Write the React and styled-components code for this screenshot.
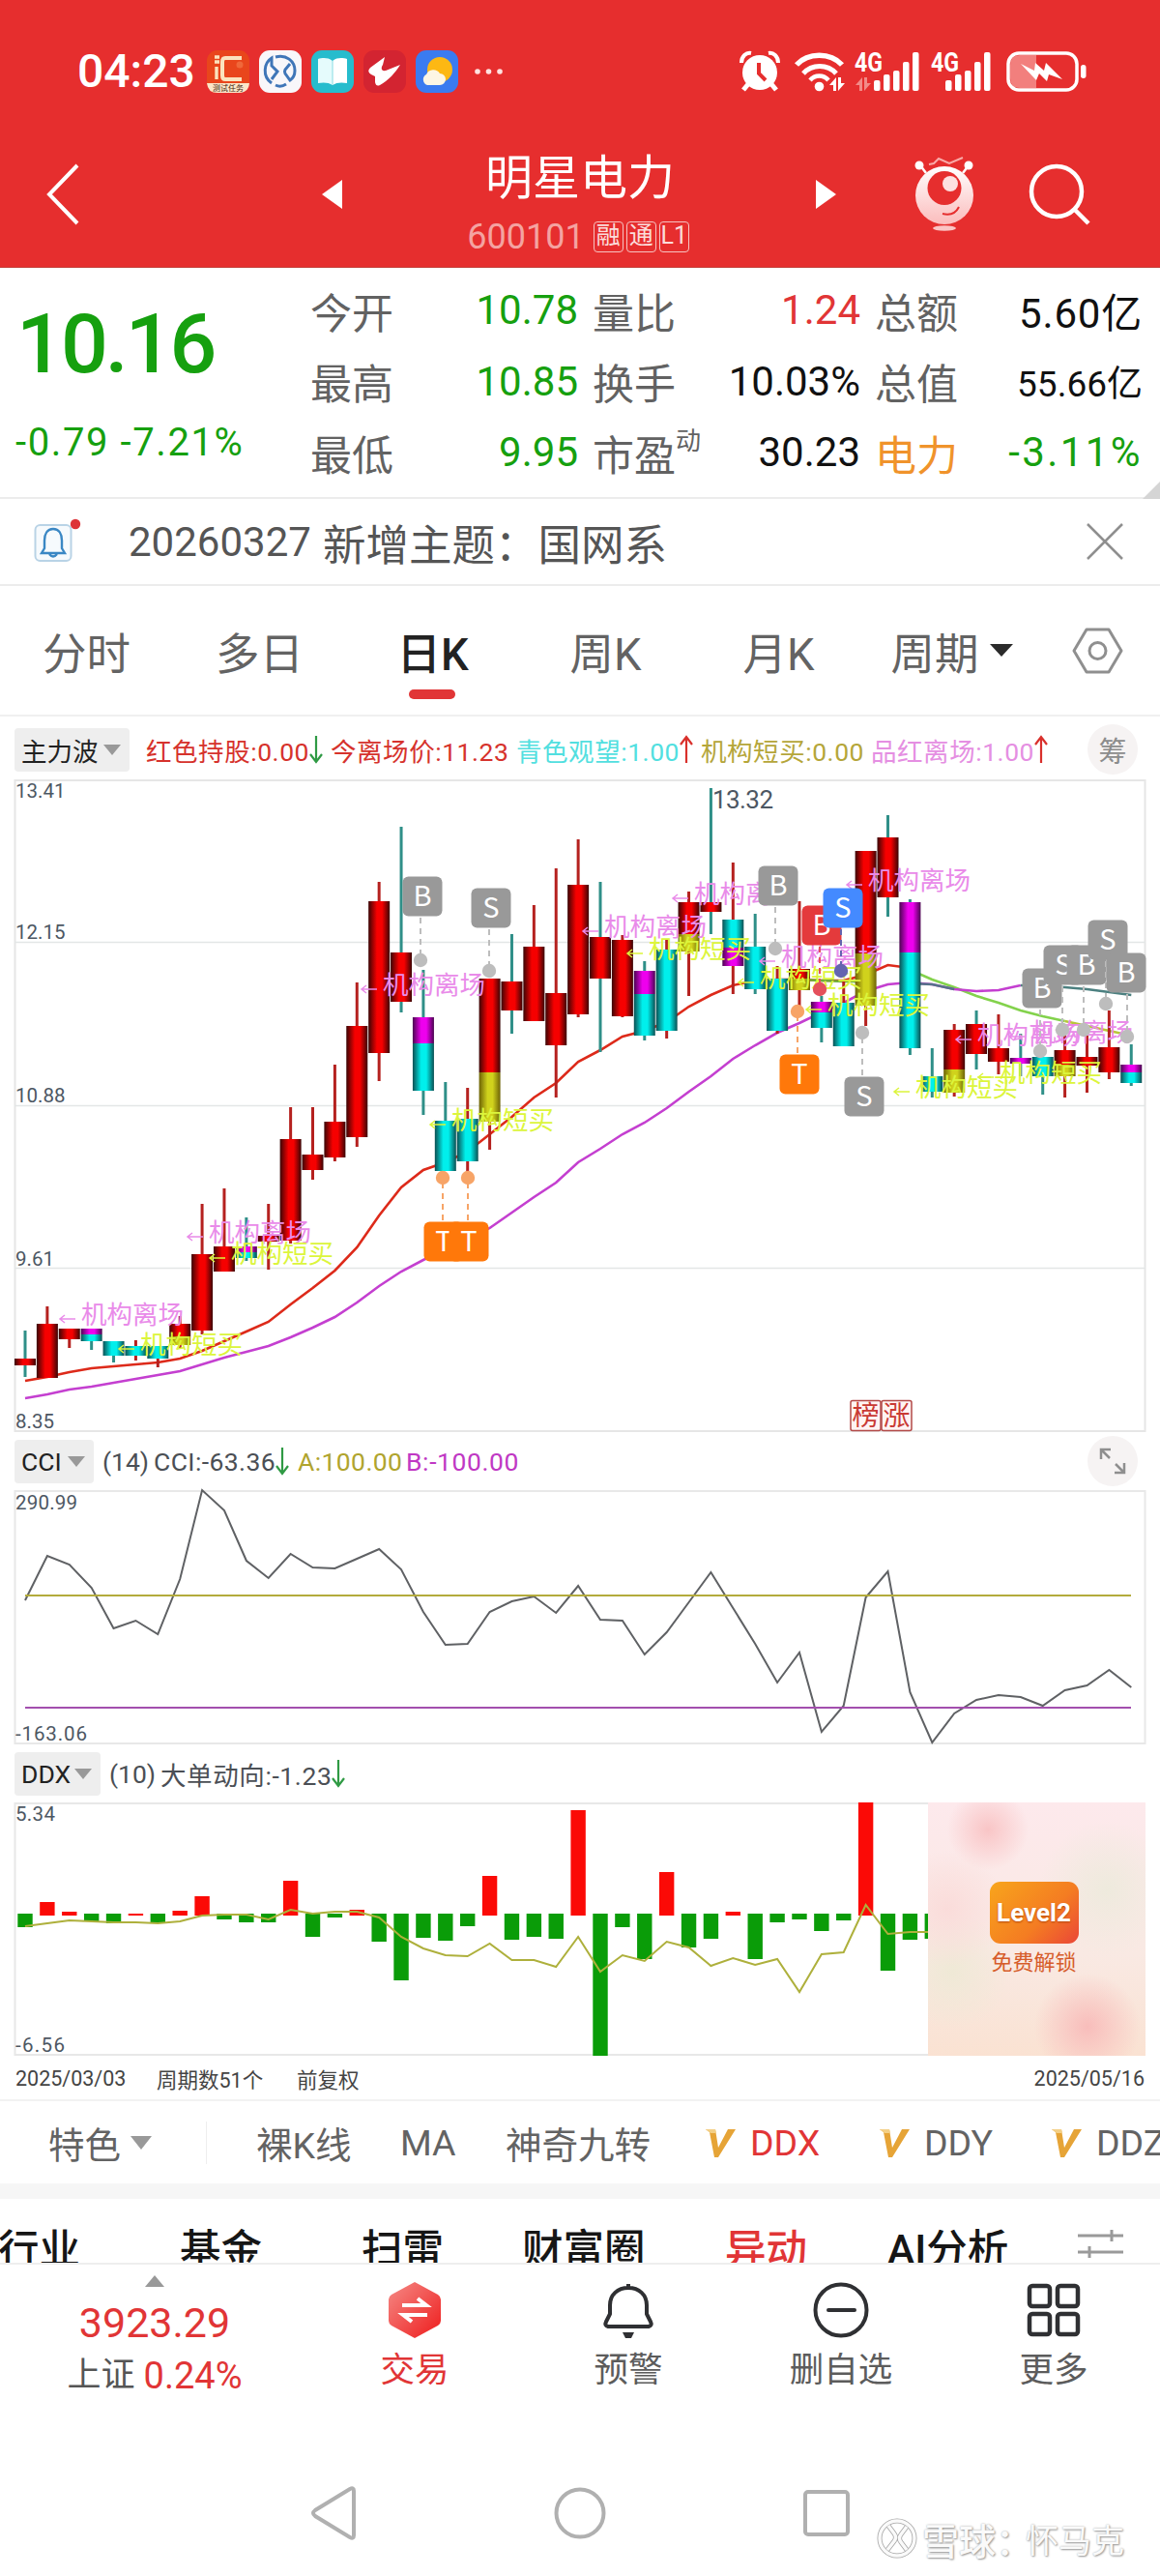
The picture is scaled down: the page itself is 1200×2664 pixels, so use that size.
import React from 'react'
import styled, {createGlobalStyle, css} from 'styled-components'

const RED = '#e62e2e'
const UP = '#e13536'
const DOWN = '#16a00f'

const GlobalStyle = createGlobalStyle`
  * {
    box-sizing: border-box;
  }
  body {
    margin: 0;
    background: #fff;
    font-family: Roboto, "Noto Sans CJK SC", sans-serif;
    color: #555;
  }
  svg {
    display: block;
    flex: none;
    overflow: visible;
  }
`;

const Screen = styled.div`
  position: relative;
  width: 1200px;
  height: 2664px;
  display: flex;
  flex-direction: column;
  overflow: hidden;
  white-space: nowrap;
`;

/* ---------- top ---------- */

const Top = styled.header`
  height: 277px;
  background: ${RED};
  border-bottom: 1px solid #c4413a;
  color: #fff;
`;

const StatusBar = styled.div`
  height: 148px;
  padding: 0 76px 0 80px;
  display: flex;
  align-items: center;
  justify-content: space-between;
`;

const StatusGroup = styled.div`
  display: flex;
  align-items: center;
  gap: 10px;
`;

const SystemGroup = styled.div`
  display: grid;
  grid-template-columns: 57px 62px 79px 78px 83px;
  align-items: center;
`;

const Clock = styled.span`
  width: 124px;
  font-size: 48px;
  font-weight: 500;
  line-height: 56px;
`;

const TitleBar = styled.div`
  height: 128px;
  padding: 0 72px 22px 48px;
  display: grid;
  grid-template-columns: 284px 150px 236px 228px 1fr 64px;
  grid-template-rows: 106px;
  align-items: center;
`;

const TitleBox = styled.div`
  margin-top: 22px;
  display: flex;
  flex-direction: column;
  align-items: center;
`;

const StockName = styled.h1`
  margin: 0;
  font-size: 49px;
  font-weight: 400;
  line-height: 66px;
`;

const CodeRow = styled.div`
  display: flex;
  align-items: center;
  gap: 3px;
  height: 54px;
  margin-left: -4px;
`;

const Code = styled.span`
  font-size: 36px;
  color: #f4a3a1;
  margin-right: 6px;
`;

const Tag = styled.span`
  width: 31px;
  height: 32px;
  border: 1.5px solid #f7c2c0;
  border-radius: 4px;
  color: #fbdcdb;
  font-size: 25px;
  line-height: 28px;
  text-align: center;
`;

/* ---------- quote ---------- */

const Quote = styled.section`
  position: relative;
  height: 239px;
  padding: 7px 18px 0 16px;
  display: grid;
  grid-template-columns: 305px 277px 15px 277px 15px 277px;
  border-bottom: 2px solid #ececec;
`;

const PriceBox = styled.div`
  display: flex;
  flex-direction: column;
  color: ${DOWN};
`;

const Price = styled.span`
  margin-top: 19px;
  font-size: 86px;
  font-weight: 500;
  line-height: 106px;
  letter-spacing: -3px;
  padding-left: 1px;
`;

const Change = styled.span`
  margin-top: 24px;
  font-size: 40px;
  line-height: 50px;
  letter-spacing: 1.6px;
`;

const QuoteCol = styled.div`
  grid-column: ${p => p.col};
  display: flex;
  flex-direction: column;
`;

const QuoteRow = styled.div`
  height: 73.5px;
  display: flex;
  align-items: center;
  justify-content: space-between;
  font-size: 43px;
`;

const QuoteLabel = styled.span`
  color: ${p => p.color || '#626262'};
  sup {
    font-size: 26px;
    line-height: 0;
    vertical-align: 22px;
  }
`;

const QuoteValue = styled.span`
  color: ${p => p.color || '#111'};
  font-size: ${p => p.size || 42}px;
  letter-spacing: ${p => p.ls || 0}px;
`;

const Corner = styled.i`
  position: absolute;
  right: 0;
  bottom: -2px;
  border-left: 18px solid transparent;
  border-bottom: 18px solid #d5d5d5;
`;

/* ---------- notice + period tabs ---------- */

const Notice = styled.section`
  height: 90px;
  padding: 0 38px 0 35px;
  display: flex;
  align-items: center;
  border-bottom: 2px solid #ececec;
`;

const NoticeDate = styled.span`
  margin-left: 49px;
  width: 201px;
  font-size: 42px;
`;

const NoticeText = styled.span`
  flex: 1;
  font-size: 44.5px;
`;

const Tabs = styled.nav`
  height: 135px;
  padding-right: 38px;
  display: flex;
  align-items: center;
  border-bottom: 2px solid #f0f0f0;
`;

const Tab = styled.button`
  width: 179px;
  height: 100%;
  padding: 0;
  border: 0;
  background: none;
  display: flex;
  align-items: center;
  justify-content: center;
  gap: 11px;
  position: relative;
  font-family: inherit;
  font-size: 45.5px;
  color: ${p => (p.$active ? '#222' : '#636363')};
  font-weight: ${p => (p.$active ? 500 : 400)};
  ${p => p.$active && css`
    &::after {
      content: '';
      position: absolute;
      left: 65px;
      top: 107px;
      width: 48px;
      height: 10px;
      border-radius: 5px;
      background: ${UP};
    }
  `}
`;

const Caret = styled.i`
  border-left: ${p => p.w / 2}px solid transparent;
  border-right: ${p => p.w / 2}px solid transparent;
  border-top: ${p => p.h}px solid ${p => p.color};
`;

const Settings = styled.span`
  margin-left: auto;
`;

/* ---------- indicator panels ---------- */

const IndicatorBar = styled.div`
  height: ${p => p.h}px;
  padding: ${p => p.pt || 0}px 22px 0 15px;
  display: flex;
  align-items: center;
  color: #4b4f55;
  font-size: 26.5px;
`;

const Chip = styled.span`
  width: ${p => p.w}px;
  height: 45px;
  margin-right: ${p => p.gap}px;
  padding: 0 9px 0 7px;
  border-radius: 4px;
  background: #eee;
  color: #222;
  display: flex;
  align-items: center;
  justify-content: space-between;
`;

const Reading = styled.span`
  width: ${p => p.w}px;
  color: ${p => p.color};
  display: flex;
  align-items: center;
  letter-spacing: ${p => p.ls || 0}px;
`;

const RoundButton = styled.button`
  width: 52px;
  height: 52px;
  margin-left: auto;
  margin-right: 1px;
  padding: 0;
  border: 0;
  border-radius: 50%;
  background: #f6f3f3;
  color: #8c8c8c;
  font: 29px "Noto Sans CJK SC", sans-serif;
  line-height: 50px;
  display: flex;
  align-items: center;
  justify-content: center;
`;

const ChartText = styled.text`
  font-size: ${p => p.size || 20.5}px;
  fill: ${p => p.fill || '#4d5763'};
`;

const FlowRow = styled.div`
  display: flex;
  height: 262px;
`;

const Level2 = styled.div`
  width: 225px;
  height: 262px;
  padding-top: 82px;
  display: flex;
  flex-direction: column;
  align-items: center;
  background:
    radial-gradient(circle 42px at 62px 28px, #f9c5c6 0, #f9c5c600 100%),
    radial-gradient(circle 55px at 165px 232px, #f8bdbb 0, #f8bdbb00 100%),
    radial-gradient(circle 70px at 185px 90px, #eeeadd 0, #eeeadd00 100%),
    radial-gradient(circle 60px at 20px 110px, #fadcda 0, #fadcda00 100%),
    radial-gradient(circle 60px at 25px 175px, #efe9d6 0, #efe9d600 100%),
    linear-gradient(#fde9ec, #f9e9e3 60%, #fae2d2);
`;

const Level2Button = styled.button`
  width: 92px;
  height: 64px;
  margin-right: 6px;
  padding: 0;
  border: 0;
  border-radius: 11px;
  background: linear-gradient(135deg, #f8a51c, #f47c22 60%, #ea4638);
  color: #fff;
  font: 700 26px Roboto, sans-serif;
  text-shadow: 0 1px 2px #b4460a;
`;

const Unlock = styled.span`
  margin: 3px 6px 0 0;
  font-size: 22px;
  line-height: 34px;
  color: #d65c2a;
`;

const DateRow = styled.div`
  height: 47px;
  padding: 2px 16px 0;
  display: grid;
  grid-template-columns: 146px 145px 1fr auto;
  align-items: center;
  border-bottom: 2px solid #f2f2f2;
  font-size: 21.5px;
  color: #444;
`;

/* ---------- lower bars ---------- */

const Features = styled.nav`
  height: 85px;
  padding-left: 50px;
  display: grid;
  grid-template-columns: 163px 52px 149px 109px 207px 180px 178px 180px;
  align-items: center;
  overflow: hidden;
  font-size: 37.5px;
  color: #636363;
`;

const Feature = styled.span`
  display: flex;
  align-items: center;
  gap: ${p => p.gap || 14}px;
  color: ${p => p.color};
`;

const Divider = styled.i`
  width: 1px;
  height: 44px;
  background: #eee;
`;

const Sections = styled.nav`
  height: 84px;
  border-top: 16px solid #f6f6f6;
  border-bottom: 2px solid #eee;
  padding-top: 22px;
  display: grid;
  grid-template-columns: 186px 188px 166px 210px 168px 197px 1fr;
  overflow: hidden;
  color: #161616;
  font-size: 42.5px;
  font-weight: 500;
  line-height: 62px;
`;

const Section = styled.span`
  margin-left: ${p => p.shift || 0}px;
  color: ${p => p.color};
`;

const BottomBar = styled.footer`
  height: 150px;
  display: grid;
  grid-template-columns: 320px 218px 224px 216px 224px;
`;

const IndexBox = styled.div`
  padding-top: 11px;
  display: flex;
  flex-direction: column;
  align-items: center;
  color: ${UP};
`;

const IndexValue = styled.span`
  font-size: 43px;
  line-height: 50px;
  margin-top: 12px;
`;

const IndexChange = styled.span`
  margin-top: 3px;
  font-size: 38px;
  line-height: 54px;
  display: flex;
  align-items: center;
  gap: 9px;
  b {
    font-size: 35px;
    font-weight: 400;
    color: #555;
  }
`;

const Action = styled.button`
  padding: 17px 0 0;
  border: 0;
  background: none;
  display: flex;
  flex-direction: column;
  align-items: center;
  gap: 5px;
  font-family: inherit;
  font-size: 35.5px;
  line-height: 54px;
  color: ${p => p.color || '#5c5c5c'};
`;

const NavBar = styled.div`
  flex: 1;
  padding: 54px 0 0 0;
  display: grid;
  grid-template-columns: 345px 1fr 1fr 345px;
  svg {
    margin-left: -30px;
  }
`;

const Watermark = styled.div`
  position: absolute;
  left: 906px;
  top: 2599px;
  height: 52px;
  display: flex;
  align-items: center;
  color: #fafafa;
  font-size: 38px;
  font-weight: 500;
  text-shadow: 1px 1px 2px #999, 0 0 2px #b0b0b0;
  span {
    font-size: 34px;
    font-weight: 400;
    margin-left: -7px;
  }
`;

/* ---------- small drawings ---------- */

const Arrow = ({up}) => (
  <svg width="14" height="30" viewBox="0 0 14 30" fill="none" stroke={up ? '#d9302c' : '#2f9a44'} strokeWidth="2.2">
    {up ? <path d="M7 29V2M1 10l6-8 6 8" /> : <path d="M7 1v27M1 20l6 8 6-8" />}
  </svg>
)

const AppIcons = () => (
  <>
    <svg width="44" height="44" viewBox="0 0 44 44">
      <rect width="44" height="44" rx="11" fill="#e9461c" />
      <path d="M36 8H19q-3 0-3 4v14q0 4 3 4h17" fill="none" stroke="#fbe3bd" strokeWidth="4" />
      <path d="M10 17v13M8 7h5M8 12h5" stroke="#fbe3bd" strokeWidth="3.4" />
      <circle cx="34" cy="15" r="3.5" fill="#f0683a" />
      <path d="M0 34h44q-1 10-11 10H11Q1 44 0 34z" fill="#fbe6c8" />
      <text x="22" y="42" fontSize="8" textAnchor="middle" fill="#42210b">测试任务</text>
    </svg>
    <svg width="44" height="44" viewBox="0 0 44 44">
      <rect width="44" height="44" rx="11" fill="#f8f7fa" />
      <g fill="none" stroke="#3f76b8" strokeWidth="3">
        <path d="M13 34C3 27 5 13 13 8v8l6 6-6 8" />
        <path d="M17 7c11-3 20 4 20 14 0 4-2 8-5 10l-5-7q-1-2 0-4l5-6M17 36c4 2 8 1 11-1" />
      </g>
    </svg>
    <svg width="44" height="44" viewBox="0 0 44 44">
      <rect width="44" height="44" rx="11" fill="#26bccd" />
      <path d="M22 11C17 7 11 8 7 9v25c5-1 11-1 15 2z" fill="#e5fbfc" />
      <path d="M22 11c5-4 11-3 15-2v25c-5-1-11-1-15 2z" fill="#fff" />
      <path d="M22 11v25" stroke="#a5e5ea" strokeWidth="1.4" />
    </svg>
    <svg width="44" height="44" viewBox="0 0 44 44">
      <rect width="44" height="44" rx="11" fill="#d32431" />
      <path d="M22 7L7 18q-4 4 1 7l4 2v6q1 5 5 3c9-5 16-13 21-21l-15 6c-5 1-5-3-3-6z" fill="#fff" />
    </svg>
    <svg width="44" height="44" viewBox="0 0 44 44">
      <rect width="44" height="44" rx="11" fill="#3a7bf0" />
      <circle cx="25" cy="20" r="13" fill="#fdb813" />
      <path d="M12 36a6 6 0 0 1-1-11 8 8 0 0 1 14-1 6 6 0 0 1 0 12z" fill="#fdf6e4" />
    </svg>
    <svg width="44" height="44" viewBox="0 0 44 44" fill="#ffe3e1">
      <circle cx="10" cy="22" r="2.8" />
      <circle cx="21.5" cy="22" r="2.8" />
      <circle cx="33" cy="22" r="2.8" />
    </svg>
  </>
)

const Signal = ({offset, dim}) => (
  <svg width={dim ? 67 : 63} height="42" viewBox={`0 0 ${dim ? 67 : 63} 42`} fill="#fff">
    <text x="0" y="20.5" fontSize="28" fontWeight="700" textLength="29" lengthAdjust="spacingAndGlyphs">4G</text>
    {dim && <path d="M1 35l7-8v14h-3v-6zM17 33l-7 8V27h3v6z" fill="#f28b88" />}
    {[11, 17, 21, 30, 40].map((h, i) => (
      <rect key={i} x={offset + i * 10} y={41 - h} width="6.5" height={h} rx="2" />
    ))}
  </svg>
)

const SystemIcons = () => (
  <SystemGroup>
    <svg width="42" height="42" viewBox="0 0 42 42">
      <g stroke="#fff" fill="none">
        <path d="M2 12c0-7 5-11 10-10M40 12c0-7-5-11-10-10" strokeWidth="4" />
        <path d="M9 34l-5 6M33 34l5 6" strokeWidth="5" />
      </g>
      <circle cx="21" cy="22" r="18" fill="#fff" />
      <path d="M20 12v11l7 7" fill="none" stroke={RED} strokeWidth="4" />
    </svg>
    <svg width="52" height="42" viewBox="0 0 52 42" fill="none" stroke="#fff" strokeWidth="5.5">
      <path d="M2 14C14 1 37 1 49 14" />
      <path d="M9 23c9-10 25-10 34 0" strokeWidth="5" />
      <path d="M16 30c5-6 14-6 19 0" strokeWidth="4.5" />
      <circle cx="25.5" cy="36.5" r="4.8" fill="#fff" stroke="none" />
      <path d="M36 35l7-8v14h-3v-6zM52 33l-7 8V27h3v6z" fill="#fff" stroke="none" />
    </svg>
    <Signal offset={20} dim />
    <Signal offset={15} />
    <svg width="83" height="42" viewBox="0 0 83 42">
      <path d="M14 4h17v34H14Q4 38 4 28V14Q4 4 14 4z" fill="#f27f7d" />
      <rect x="2" y="2" width="71" height="38" rx="11" fill="none" stroke="#fff" strokeWidth="3.5" />
      <path d="M15 13l14 7 1-8 9 8 2-8 17 17-14-5-2 7-8-8-3 7z" fill="#fff" />
      <rect x="77" y="14" width="5.5" height="14" rx="2.7" fill="#fff" />
    </svg>
  </SystemGroup>
)

const Robot = () => (
  <svg width="62" height="78" viewBox="0 0 62 78">
    <defs>
      <linearGradient id="robot" x1="0" y1="0" x2="0" y2="1">
        <stop offset="0" stopColor="#fff" />
        <stop offset="1" stopColor="#fbbcbc" />
      </linearGradient>
    </defs>
    <path d="M15 8l5-1 5-5 11 5 14-6" fill="none" stroke="#f9aaa8" strokeWidth="2" />
    <path d="M6 9l6 8M56 9l-6 8" stroke="#fff" strokeWidth="2.5" />
    <circle cx="5" cy="9" r="4.5" fill="#fff" />
    <circle cx="56" cy="9" r="4.5" fill="#fff" />
    <circle cx="31" cy="40" r="30" fill="url(#robot)" />
    <circle cx="31" cy="32.5" r="17.5" fill={RED} />
    <circle cx="37" cy="28" r="8" fill="#fde0e0" />
    <path d="M29 59c8 2 14-1 17-7" fill="none" stroke={RED} strokeWidth="2" />
    <ellipse cx="31" cy="74" rx="12" ry="2.8" fill="#fbc4c4" />
  </svg>
)

const GoldV = () => (
  <svg width="32" height="30" viewBox="0 0 32 30">
    <path d="M0 1h10l3 19L23 1h8L13 30H9L4 4z" fill="#e6a437" />
    <path d="M0 1h10l1 4H5z" fill="#f3cf86" />
  </svg>
)

/* ---------- charts ---------- */

const STEP = 22.885
const cx = i => 26 + i * STEP
const line = (values, from = 0) => values.map((y, i) => `${cx(i + from).toFixed(1)},${y}`).join(' ')

// high, top, bottom, low, wick, fill, [split, lower fill]
const CANDLES = [
  [570, 599, 606, 618, 't', 'r'], [545, 563, 619, 619, 'r', 'r'], [568, 568, 579, 588, 'r', 'r'],
  [568, 568, 581, 590, 't', 'm', 574, 'c'], [581, 581, 596, 603, 't', 'c'], [580, 586, 596, 601, 'r', 'c'],
  [586, 586, 599, 608, 'r', 'c'], [555, 563, 585, 589, 'r', 'r', 576, 'y'], [439, 491, 570, 574, 'r', 'r'],
  [423, 483, 509, 509, 'r', 'r'], [453, 483, 495, 498, 't', 'm', 489, 'c'], [439, 472, 478, 507, 'r', 'r'],
  [339, 372, 477, 480, 'r', 'r'], [339, 388, 404, 414, 'r', 'r'], [295, 354, 391, 395, 'r', 'r'],
  [210, 255, 370, 380, 'r', 'r'], [106, 126, 283, 312, 'r', 'r'], [49, 179, 230, 241, 't', 'r'],
  [197, 246, 322, 347, 't', 'm', 273, 'c'], [313, 353, 405, 405, 't', 'c'], [319, 351, 395, 406, 'r', 'c'],
  [206, 206, 354, 383, 'r', 'r', 303, 'y'], [160, 209, 239, 263, 't', 'r'], [130, 173, 250, 250, 'r', 'r'],
  [92, 221, 275, 329, 'r', 'r'], [62, 109, 243, 246, 'r', 'r'], [106, 163, 206, 282, 't', 'r'],
  [161, 166, 245, 246, 'r', 'r'], [188, 198, 265, 270, 't', 'm', 222, 'c'], [166, 176, 260, 268, 'r', 'c'],
  [116, 127, 178, 224, 'r', 'r', 160, 'y'], [9, 127, 137, 160, 't', 'r'], [86, 145, 193, 222, 'r', 'c', 174, 'm'],
  [139, 173, 217, 222, 't', 'c'], [193, 206, 260, 263, 'r', 'c'], [126, 196, 218, 234, 'r', 'r', 206, 'y'],
  [224, 230, 257, 272, 't', 'm', 241, 'c'], [207, 231, 276, 276, 'r', 'c'], [74, 74, 234, 255, 'r', 'r', 180, 'y'],
  [37, 60, 122, 142, 't', 'r'], [124, 127, 278, 285, 't', 'm', 179, 'c'], [278, 307, 323, 329, 't', 'c'],
  [253, 259, 324, 328, 'r', 'r', 300, 'y'], [239, 253, 284, 300, 't', 'r'], [243, 278, 292, 305, 'r', 'r'],
  [263, 288, 294, 307, 't', 'm'], [287, 287, 307, 326, 't', 'c'], [264, 280, 307, 329, 'r', 'r', 295, 'y'],
  [265, 287, 296, 324, 'r', 'r'], [239, 277, 303, 310, 'r', 'r'], [274, 295, 314, 317, 't', 'm', 303, 'c'],
]

const MA_FAST = [622, 618, 613, 609, 607, 605, 603, 599, 591, 581, 571, 561, 543, 526, 508, 484, 451, 422, 404, 396,
  385, 367, 349, 329, 314, 292, 280, 266, 260, 251, 235, 223, 213, 208, 207, 207, 208, 208, 202, 192, 195]
const MA_FALL = [197, 207, 215, 224, 231, 239, 245, 250]
const MA_SLOW = [640, 636, 631, 628, 624, 620, 616, 612, 605, 598, 592, 586, 577, 567, 556, 541, 524, 509, 497, 486,
  476, 464, 448, 432, 417, 396, 382, 367, 355, 340, 323, 307, 289, 275, 262, 252, 241, 231, 219, 212, 210, 212,
  217, 219, 218, 213]

const EXITS = [[84, 553], [216, 468], [396, 212], [625, 152], [718, 118], [808, 183], [898, 104], [1011, 264], [1066, 261]]
const BUYS = [[145, 584], [239, 490], [467, 352], [671, 175], [786, 205], [856, 233], [947, 318], [1034, 303]]

const GREY = '#999'
const PINS = [
  ['B', 437, 121, 435, 187, GREY, '#bdbdbd'],
  ['S', 508, 133, 506, 198, GREY, '#bdbdbd'],
  ['T', 459, 478, 458, 412, '#ff780a', '#f7a467'],
  ['T', 485, 478, 484, 412, '#ff780a', '#f7a467'],
  ['B', 805, 110, 802, 175, GREY, '#bdbdbd'],
  ['B', 850, 151, 848, 217, '#e43a3c', '#e4505c'],
  ['S', 872, 133, 870, 198, '#448aff', '#6464b0'],
  ['T', 827, 305, 825, 240, '#ff780a', '#f7a467'],
  ['S', 894, 328, 892, 262, GREY, '#bdbdbd'],
  ['B', 1078, 216, 1076, 281, GREY, '#bdbdbd'],
  ['S', 1100, 192, 1099, 259, GREY, '#bdbdbd'],
  ['B', 1124, 192, 1121, 259, GREY, '#bdbdbd'],
  ['S', 1146, 166, 1144, 232, GREY, '#bdbdbd'],
  ['B', 1165, 200, 1166, 266, GREY, '#bdbdbd'],
]

const FILLS = {
  r: ['#3a0505', '#f60000'],
  c: ['#0b4f52', '#00efec'],
  m: ['#4a0550', '#ee00ee'],
  y: ['#6d6205', '#d0d21c'],
}

const Gradients = () => (
  <defs>
    {Object.entries(FILLS).map(([key, [edge, mid]]) => (
      <linearGradient id={`fill-${key}`} key={key}>
        <stop offset="0" stopColor={edge} />
        <stop offset="0.4" stopColor={mid} />
        <stop offset="0.64" stopColor={mid} />
        <stop offset="1" stopColor={edge} />
      </linearGradient>
    ))}
  </defs>
)

const Signals = ({points, label, color}) => points.map(([x, y], i) => (
  <g key={i}>
    <path d={`M${x - 6} ${y + 5}h-16m5-4l-5 4 5 4`} fill="none" stroke={color} strokeWidth="1.5" />
    <ChartText x={x} y={y + 10} size={26.5} fill={color}>{label}</ChartText>
  </g>
))

const KLineChart = () => (
  <svg width="1200" height="675" viewBox="0 0 1200 675">
    <Gradients />
    <rect x="15.5" y="1" width="1169" height="673" fill="none" stroke="#e6e6e6" strokeWidth="2" />
    {[168, 337, 505].map(y => <path key={y} d={`M15 ${y}.5h1170`} stroke="#e3e6e6" strokeWidth="1.5" />)}
    {[['13.41', 19], ['12.15', 165], ['10.88', 334], ['9.61', 503], ['8.35', 671]].map(([t, y]) => (
      <ChartText key={t} x="16" y={y}>{t}</ChartText>
    ))}
    <g fill="none" strokeWidth="2.6">
      <polyline points={line(MA_FAST)} stroke="#dd2a1a" />
      <polyline points={line([207, 208, 209, 209], 35)} stroke="#6fae3a" />
      <polyline points={line(MA_FALL, 40)} stroke="#83d24c" />
      <polyline points={line([250, 255, 260, 265], 47)} stroke="#b8c63a" />
      <polyline points={line(MA_SLOW)} stroke="#c43fd0" />
      <polyline points={line([211, 212, 217], 40)} stroke="#56728a" />
      <polyline points={line([213, 214, 215, 217, 220, 223], 45)} stroke="#4c8080" />
    </g>
    {CANDLES.map(([high, top, bottom, low, wick, fill, split, fill2], i) => (
      <g key={i}>
        <rect x={cx(i) - 1.5} y={high} width="3" height={low - high} fill={wick === 'r' ? '#b5211f' : '#2f8f88'} />
        <rect x={cx(i) - 11} y={top} width="22" height={(split || bottom) - top} fill={`url(#fill-${fill})`} />
        {split && <rect x={cx(i) - 11} y={split} width="22" height={bottom - split} fill={`url(#fill-${fill2})`} />}
      </g>
    ))}
    <ChartText x="737" y="30" size={26} textLength="63">13.32</ChartText>
    <Signals points={EXITS} label="机构离场" color="#e98be9" />
    <Signals points={BUYS} label="机构短买" color="#dcf53c" />
    {PINS.map(([letter, x, y, dx, dy, color, dot], i) => (
      <g key={i}>
        <path d={`M${dx} ${y}V${dy}`} stroke={dot} strokeWidth="2" strokeDasharray="6 5" />
        <circle cx={dx} cy={dy} r="7.2" fill={dot} />
        <rect x={x - 20.5} y={y - 20.5} width="41" height="41" rx="6" fill={color} />
        <ChartText x={x} y={y + 10} size={29} fill="#fff" textAnchor="middle" fontFamily="Noto Sans CJK SC">{letter}</ChartText>
      </g>
    ))}
    {[['榜', 880], ['涨', 912]].map(([t, x]) => (
      <g key={t}>
        <rect x={x} y="642.5" width="31" height="31" rx="2" fill="#fff4f3" stroke="#b34a48" strokeWidth="1.5" />
        <ChartText x={x + 15.5} y="668" size={28} fill="#c93a34" textAnchor="middle">{t}</ChartText>
      </g>
    ))}
  </svg>
)

const CCI = [114, 68, 77, 101, 143, 135, 149, 92, 0, 21, 73, 91, 66, 80, 81, 71, 61, 82, 126, 160, 159, 126, 115, 110,
  127, 99, 134, 135, 170, 147, 116, 85, 122, 159, 199, 168, 250, 223, 111, 84, 209, 261, 231, 217, 212, 214, 223,
  207, 202, 186, 204]

const CciChart = () => (
  <svg width="1200" height="263" viewBox="0 0 1200 263">
    <rect x="15.5" y="1" width="1169" height="261" fill="none" stroke="#e8e8e8" strokeWidth="2" />
    <ChartText x="16" y="20" textLength="64">290.99</ChartText>
    <ChartText x="16" y="259" textLength="74">-163.06</ChartText>
    <polyline points={line(CCI)} fill="none" stroke="#5f6164" strokeWidth="2" />
    <path d="M26 109h1144" stroke="#b3ab3c" strokeWidth="2.2" />
    <path d="M26 225h1144" stroke="#a34fae" strokeWidth="2.2" />
  </svg>
)

const DDX_BARS = [129, 103, 113, 123, 125, 115, 125, 112, 97, 121, 124, 124, 81, 139, 119, 111, 144, 184, 140, 143, 128,
  76, 142, 139, 141, 8, 262, 129, 162, 72, 150, 141, 113, 162, 124, 121, 133, 122, 0, 174, 142, 141]
const DDX_LINE = [128, 125, 122, 123, 124, 124, 125, 123, 117, 116, 116, 121, 111, 115, 113, 113, 119, 139, 151, 158,
  159, 146, 163, 163, 170, 139, 175, 158, 164, 144, 150, 169, 161, 168, 162, 196, 157, 155, 106, 136, 134, 134]

const DdxChart = () => (
  <svg width="960" height="262" viewBox="0 0 960 262">
    <path d="M960 1H15.5v260H960" fill="none" stroke="#e8e8e8" strokeWidth="2" />
    <ChartText x="16" y="19" textLength="41">5.34</ChartText>
    <ChartText x="16" y="258" textLength="51">-6.56</ChartText>
    {DDX_BARS.map((y, i) => (y < 117
      ? <rect key={i} x={cx(i) - 7.7} y={y} width="15.4" height={117 - y} fill="#fb0a06" />
      : <rect key={i} x={cx(i) - 7.7} y="115" width="15.4" height={y - 115} fill="#0a9c08" />
    ))}
    <polyline points={line(DDX_LINE)} fill="none" stroke="#aeb03c" strokeWidth="2" />
  </svg>
)

/* ---------- data ---------- */

// label, value, colour, superscript, font size, letter spacing
const QUOTES = [
  [['今开', '10.78', DOWN], ['最高', '10.85', DOWN], ['最低', '9.95', DOWN]],
  [['量比', '1.24', UP], ['换手', '10.03%'], ['市盈', '30.23', null, '动']],
  [['总额', '5.60亿', null, null, 42, 0.8], ['总值', '55.66亿', null, null, 37], ['电力', '-3.11%', DOWN, null, 42, 2.4]],
]

const READINGS = [
  ['红色持股:0.00', '#d6322c', 191, 'down'],
  ['今离场价:11.23', '#d6322c', 192],
  ['青色观望:1.00', '#52dfe0', 191, 'up'],
  ['机构短买:0.00', '#b5a63a', 176],
  ['品红离场:1.00', '#e58fe2', 190, 'up'],
]

const App = () => (
  <>
    <GlobalStyle />
    <Screen>
      <Top>
        <StatusBar>
          <StatusGroup>
            <Clock>04:23</Clock>
            <AppIcons />
          </StatusGroup>
          <SystemIcons />
        </StatusBar>
        <TitleBar>
          <svg width="34" height="64" viewBox="0 0 34 64" fill="none" stroke="#fff" strokeWidth="4">
            <path d="M32 2L3 32l29 30" />
          </svg>
          <svg width="22" height="30" viewBox="0 0 22 30"><path d="M22 0v30L1 15z" fill="#fff" /></svg>
          <TitleBox>
            <StockName>明星电力</StockName>
            <CodeRow>
              <Code>600101</Code>
              <Tag>融</Tag>
              <Tag>通</Tag>
              <Tag>L1</Tag>
            </CodeRow>
          </TitleBox>
          <svg width="147" height="30" viewBox="0 0 147 30"><path d="M126 0v30l21-15z" fill="#fff" /></svg>
          <Robot />
          <svg width="64" height="64" viewBox="0 0 64 64" fill="none" stroke="#fff" strokeWidth="4.5">
            <circle cx="29" cy="29" r="26" />
            <path d="M47 47l15 15" />
          </svg>
        </TitleBar>
      </Top>

      <Quote>
        <PriceBox>
          <Price>10.16</Price>
          <Change>-0.79 -7.21%</Change>
        </PriceBox>
        {QUOTES.map((rows, c) => (
          <QuoteCol key={c} col={c * 2 + 2}>
            {rows.map(([label, value, color, sup, size, ls]) => (
              <QuoteRow key={label}>
                <QuoteLabel color={label === '电力' ? '#f0932b' : undefined}>
                  {label}{sup && <sup>{sup}</sup>}
                </QuoteLabel>
                <QuoteValue color={color} size={size} ls={ls}>{value}</QuoteValue>
              </QuoteRow>
            ))}
          </QuoteCol>
        ))}
        <Corner />
      </Quote>

      <Notice>
        <svg width="49" height="48" viewBox="0 0 49 48">
          <rect x="1.5" y="7" width="37" height="37" rx="5" fill="#f6fafd" stroke="#b9d3e6" strokeWidth="2" />
          <path d="M8 36h24l-3-5v-8c0-7-3-12-9-12s-9 5-9 12v8z" fill="none" stroke="#3a87c4" strokeWidth="2.4" />
          <path d="M16 37q4 5 8 0" fill="none" stroke="#3a87c4" strokeWidth="2.4" />
          <circle cx="43" cy="6" r="5.2" fill="#dd3338" />
        </svg>
        <NoticeDate>20260327</NoticeDate>
        <NoticeText>新增主题：国网系</NoticeText>
        <svg width="38" height="38" viewBox="0 0 38 38" stroke="#8f8f8f" strokeWidth="2.5">
          <path d="M1 1l36 36M37 1L1 37" />
        </svg>
      </Notice>

      <Tabs>
        {['分时', '多日', '日K', '周K', '月K'].map(name => (
          <Tab key={name} $active={name === '日K'}>{name}</Tab>
        ))}
        <Tab>周期<Caret w={24} h={13} color="#2b2b2b" /></Tab>
        <Settings>
          <svg width="53" height="48" viewBox="0 0 53 48" fill="none" stroke="#8f8f8f" strokeWidth="3">
            <path d="M15 2h23l13 22-13 22H15L2 24z" strokeLinejoin="round" />
            <circle cx="26.5" cy="24" r="8.5" />
          </svg>
        </Settings>
      </Tabs>

      <IndicatorBar h={65} pt={3}>
        <Chip w={119} gap={17}>主力波<Caret w={19} h={11} color="#999" /></Chip>
        {READINGS.map(([text, color, w, dir]) => (
          <Reading key={text} w={w} color={color} ls={0.55}>
            {text}{dir && <Arrow up={dir === 'up'} />}
          </Reading>
        ))}
        <RoundButton>筹</RoundButton>
      </IndicatorBar>
      <KLineChart />

      <IndicatorBar h={60}>
        <Chip w={82} gap={9}>CCI<Caret w={19} h={11} color="#999" /></Chip>
        <Reading w={53}>(14)</Reading>
        <Reading w={149} ls={0.4}>CCI:-63.36<Arrow /></Reading>
        <Reading w={112} color="#b0a42e" ls={0.4}>A:100.00</Reading>
        <Reading w={130} color="#c038c4" ls={0.6}>B:-100.00</Reading>
        <RoundButton>
          <svg width="28" height="28" viewBox="0 0 28 28" fill="none" stroke="#8f8f8f" strokeWidth="2.5">
            <path d="M2 12V2h10M2 2l9 9M26 16v10H16M26 26l-9-9" />
          </svg>
        </RoundButton>
      </IndicatorBar>
      <CciChart />

      <IndicatorBar h={60}>
        <Chip w={89} gap={9}>DDX<Caret w={19} h={11} color="#999" /></Chip>
        <Reading w={53}>(10)</Reading>
        <Reading w={200} ls={0.6}>大单动向:-1.23<Arrow /></Reading>
      </IndicatorBar>
      <FlowRow>
        <DdxChart />
        <Level2>
          <Level2Button>Level2</Level2Button>
          <Unlock>免费解锁</Unlock>
        </Level2>
      </FlowRow>
      <DateRow>
        <span>2025/03/03</span>
        <span>周期数51个</span>
        <span>前复权</span>
        <span>2025/05/16</span>
      </DateRow>

      <Features>
        <Feature gap={10}>特色<Caret w={23} h={14} color="#999" /></Feature>
        <Divider />
        <Feature>裸K线</Feature>
        <Feature>MA</Feature>
        <Feature>神奇九转</Feature>
        <Feature color={UP}><GoldV />DDX</Feature>
        <Feature><GoldV />DDY</Feature>
        <Feature><GoldV />DDZ</Feature>
      </Features>
      <Sections>
        <Section shift={-2}>行业</Section>
        <Section>基金</Section>
        <Section>扫雷</Section>
        <Section>财富圈</Section>
        <Section color={UP}>异动</Section>
        <Section>AI分析</Section>
        <svg width="48" height="60" viewBox="0 0 48 60" stroke="#9a9a9a" strokeWidth="3">
          <path d="M0 16h47M35 10v12M0 33h47M12 27v12M0 50h47M35 44v12" />
        </svg>
      </Sections>

      <BottomBar>
        <IndexBox>
          <svg width="20" height="12" viewBox="0 0 20 12"><path d="M10 0l10 12H0z" fill="#999" /></svg>
          <IndexValue>3923.29</IndexValue>
          <IndexChange><b>上证</b>0.24%</IndexChange>
        </IndexBox>
        <Action color={UP}>
          <svg width="60" height="60" viewBox="0 0 60 60">
            <defs>
              <linearGradient id="trade" x1="0" y1="0" x2="1" y2="1">
                <stop offset="0" stopColor="#f58a86" />
                <stop offset="1" stopColor="#ee1c1c" />
              </linearGradient>
            </defs>
            <path d="M30 1l24 13q3 2 3 5v22q0 3-3 5L30 59 6 46q-3-2-3-5V19q0-3 3-5z" fill="url(#trade)" />
            <path d="M17 25h25l-9-7M43 35H18l9 7" fill="none" stroke="#fff" strokeWidth="4" />
          </svg>
          交易
        </Action>
        <Action>
          <svg width="60" height="60" viewBox="0 0 60 60" fill="none" stroke="#2f3033" strokeWidth="4">
            <path d="M30 3v4M9 47q-4-1-2-5l4-8V25c0-11 8-18 19-18s19 7 19 18v9l4 8q2 4-2 5z" strokeLinejoin="round" />
            <path d="M24 53h12l-3 6h-6z" fill="#2f3033" stroke="none" />
          </svg>
          预警
        </Action>
        <Action>
          <svg width="60" height="60" viewBox="0 0 60 60" fill="none" stroke="#2f3033" strokeWidth="4">
            <circle cx="30" cy="30" r="26.5" />
            <path d="M17 30h27" strokeLinecap="round" />
          </svg>
          删自选
        </Action>
        <Action>
          <svg width="60" height="60" viewBox="0 0 60 60" fill="none" stroke="#2f3033" strokeWidth="4.5">
            <rect x="5" y="5" width="21" height="21" rx="3" />
            <rect x="34" y="5" width="21" height="21" rx="3" />
            <rect x="5" y="34" width="21" height="21" rx="3" />
            <rect x="34" y="34" width="21" height="21" rx="3" />
          </svg>
          更多
        </Action>
      </BottomBar>

      <NavBar>
        <i />
        <svg width="60" height="104" viewBox="0 0 60 104" fill="none" stroke="#b0b0b0" strokeWidth="4">
          <path d="M47 28q4-2 4 2v46q0 4-4 2L11 56q-4-3 0-6z" />
        </svg>
        <svg width="60" height="104" viewBox="0 0 60 104" fill="none" stroke="#b0b0b0" strokeWidth="4">
          <circle cx="30" cy="53" r="24.5" />
        </svg>
        <svg width="60" height="104" viewBox="0 0 60 104" fill="none" stroke="#b0b0b0" strokeWidth="4">
          <rect x="8" y="31" width="44" height="44" rx="3" />
        </svg>
      </NavBar>

      <Watermark>
        <svg width="48" height="48" viewBox="0 0 48 48" fill="none">
          <g stroke="#a5a5a5" strokeWidth="5">
            <circle cx="22" cy="24" r="18" />
            <path d="M13 11l6 8q3 4 0 8l-7 9M32 12l-6 8q-3 4 0 8l6 8" />
          </g>
          <g stroke="#fafafa" strokeWidth="3.4">
            <circle cx="22" cy="24" r="18" />
            <path d="M13 11l6 8q3 4 0 8l-7 9M32 12l-6 8q-3 4 0 8l6 8" />
          </g>
        </svg>
        雪球：<span>怀马克</span>
      </Watermark>
    </Screen>
  </>
)

export default App
